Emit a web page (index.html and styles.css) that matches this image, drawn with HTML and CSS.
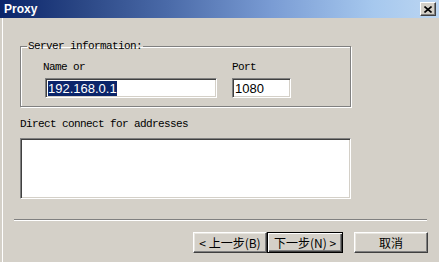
FILE: index.html
```html
<!DOCTYPE html>
<html lang="en">
<head>
    <meta charset="UTF-8">
    <title>Proxy</title>
    <link rel="stylesheet" href="styles.css">
</head>
<body>
    <div class="window">
        <div class="titlebar">
            <span class="title">Proxy</span>
            <button class="close-btn">
                <svg width="8" height="7" viewBox="0 0 8 7">
                    <path d="M0.5 0.5 L7.5 6.5 M7.5 0.5 L0.5 6.5" stroke="#000" stroke-width="1.6" fill="none"/>
                </svg>
            </button>
        </div>
        <div class="content">
            <fieldset class="group">
                <legend>Server information:</legend>
                <div class="fields">
                    <div class="field name-field">
                        <label class="label">Name or</label>
                        <div class="input name-input"><span class="selected">192.168.0.1</span></div>
                    </div>
                    <div class="field port-field">
                        <label class="label">Port</label>
                        <div class="input port-input">1080</div>
                    </div>
                </div>
            </fieldset>
            <div class="label direct-label">Direct connect for addresses</div>
            <div class="input textarea"></div>
            <div class="separator"></div>
            <div class="buttons">
                <button class="btn back-btn">&lt; 上一步(B)</button>
                <button class="btn next-btn default">下一步(N) &gt;</button>
                <button class="btn cancel-btn">取消</button>
            </div>
        </div>
    </div>
</body>
</html>
```

FILE: styles.css
```css
body {
    margin: 0;
    padding: 0;
    background: #d4d0c8;
}

.window {
    width: 439px;
    height: 262px;
    background: #d4d0c8;
    overflow: hidden;
    display: flex;
    flex-direction: column;
}

.titlebar {
    height: 18px;
    flex: none;
    display: flex;
    align-items: center;
    justify-content: space-between;
    padding: 0 3px 0 4px;
    background: linear-gradient(to right, #0a246a 0%, #2a4684 18%, #4a6aa8 38%, #7a9cd4 62%, #a6c8ee 85%, #bcd6f2 100%);
}

.title {
    font-family: "Liberation Sans", Arial, sans-serif;
    font-weight: bold;
    font-size: 12px;
    color: #fff;
}

.close-btn {
    width: 16px;
    height: 14px;
    padding: 0;
    display: flex;
    align-items: center;
    justify-content: center;
    background: #d4d0c8;
    border: 1px solid;
    border-color: #fff #404040 #404040 #fff;
    box-shadow: inset -1px -1px 0 #808080;
}

.content {
    flex: 1;
    border-left: 2px solid #d4d0c8;
    box-shadow: inset 1px 0 0 #fff;
    padding: 22px 0 0 18px;
}

.label,
legend {
    font-family: "Liberation Mono", "Courier New", monospace;
    font-size: 11px;
    letter-spacing: -0.6px;
    line-height: 12px;
    color: #000;
}

.group {
    width: 329px;
    height: 56px;
    margin: 0;
    padding: 9px 0 0 0;
    border: 1px solid #808080;
    box-shadow: 1px 1px 0 #fff, inset 1px 1px 0 #fff;
    box-sizing: content-box;
    min-inline-size: 0;
}

.group legend {
    margin-left: 6px;
    padding: 0 1px;
}

.fields {
    display: flex;
    gap: 15px;
    margin-left: 22px;
}

.field {
    display: flex;
    flex-direction: column;
    gap: 5px;
}

.name-field .input {
    margin-left: 2px;
}

.input {
    background: #fff;
    border: 1px solid;
    border-color: #808080 #fff #fff #808080;
    box-shadow: inset 1px 1px 0 #404040, inset -1px -1px 0 #d4d0c8;
    box-sizing: border-box;
    font-family: "Liberation Sans", Arial, sans-serif;
    font-size: 13px;
    line-height: 16px;
    padding: 2px 2px 0 2px;
}

.name-input {
    width: 172px;
    height: 20px;
}

.port-input {
    width: 59px;
    height: 20px;
}

.selected {
    background: #0a246a;
    color: #fff;
}

.direct-label {
    margin-top: 11px;
}

.textarea {
    width: 331px;
    height: 61px;
    margin-top: 8px;
}

.separator {
    width: 413px;
    height: 0;
    margin-top: 20px;
    margin-left: -6px;
    border-top: 1px solid #808080;
    border-bottom: 1px solid #fff;
}

.buttons {
    display: flex;
    margin-top: 11px;
    margin-left: 173px;
}

.btn {
    height: 21px;
    width: 74px;
    padding: 0;
    background: #d4d0c8;
    border: 1px solid;
    border-color: #fff #404040 #404040 #fff;
    box-shadow: inset -1px -1px 0 #808080, inset 1px 1px 0 #e8e6e0;
    font-family: "Noto Sans CJK SC", sans-serif;
    font-size: 12px;
    line-height: 17px;
    color: #000;
}

.next-btn {
    width: 76px;
    border-color: #000;
    box-shadow: inset 1px 1px 0 #fff, inset -1px -1px 0 #404040, inset -2px -2px 0 #808080;
}

.cancel-btn {
    margin-left: 11px;
}
```
